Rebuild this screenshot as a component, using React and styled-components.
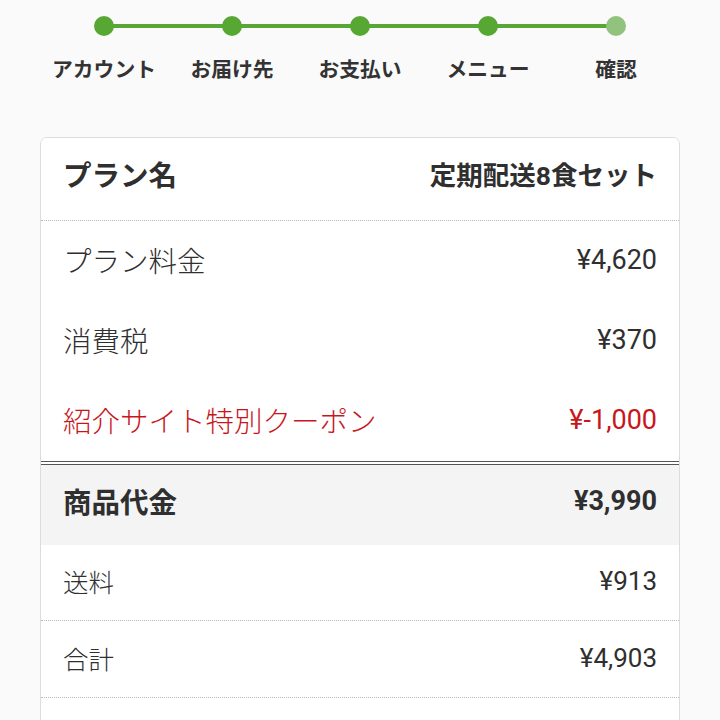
import React from "react";
import styled, { createGlobalStyle } from "styled-components";

const Global = createGlobalStyle`
  html, body { margin: 0; padding: 0; background: #fafafa; }
  body { font-family: Roboto, "Noto Sans CJK JP", sans-serif; color: #2f2f2f; }
  * { box-sizing: border-box; }
`;

const Page = styled.div`
  padding: 16px 40px 0;
`;

const Stepper = styled.div`
  display: grid;
  grid-template-columns: repeat(5, 1fr);
`;

const Step = styled.div`
  position: relative;
  display: flex;
  flex-direction: column;
  align-items: center;
  gap: 20px;
  &::before {
    content: "";
    display: ${(p) => (p.$first ? "none" : "block")};
    position: absolute;
    top: 8px;
    right: 50%;
    width: 100%;
    height: 4px;
    background: #58a734;
  }
`;

const Dot = styled.div`
  position: relative;
  z-index: 1;
  width: 20px;
  height: 20px;
  border-radius: 50%;
  background: ${(p) => (p.$pending ? "#91c27e" : "#58a734")};
`;

const StepLabel = styled.div`
  font-size: 20.8px;
  line-height: 28px;
  font-weight: 700;
  color: #333;
  white-space: nowrap;
`;

const Card = styled.div`
  margin-top: 53px;
  background: #fff;
  border: 1px solid #dcdcdc;
  border-radius: 7px;
  overflow: hidden;
  min-height: 640px;
`;

const Row = styled.div`
  display: flex;
  justify-content: space-between;
  align-items: center;
  padding: 0 22px ${(p) => p.$lift}px;
  height: ${(p) => p.$h}px;
  font-weight: ${(p) => (p.$bold ? 700 : 300)};
  color: ${(p) => (p.$red ? "#c8161d" : "#2f2f2f")};
  background: ${(p) => (p.$gray ? "#f4f4f4" : "#fff")};
  border-bottom: ${(p) =>
    p.$line === "dotted"
      ? "1px dotted #b9b9b9"
      : p.$line === "double"
      ? "4px double #555"
      : "none"};
  box-sizing: content-box;
`;

const Label = styled.span`
  font-size: ${(p) => p.$size}px;
`;
const Value = styled.span`
  font-size: ${(p) => p.$size}px;
  font-weight: ${(p) => (p.$bold ? 700 : 400)};
`;

const steps = [
  { label: "アカウント" },
  { label: "お届け先" },
  { label: "お支払い" },
  { label: "メニュー" },
  { label: "確認", pending: true },
];

const rows = [
  { label: "プラン名", value: "定期配送8食セット", h: 71, lift: 11, ls: 28.5, vs: 26.5, bold: true, line: "dotted" },
  { label: "プラン料金", value: "¥4,620", h: 77, lift: 3, ls: 28.5, vs: 27 },
  { label: "消費税", value: "¥370", h: 77, lift: 3, ls: 28.5, vs: 27 },
  { label: "紹介サイト特別クーポン", value: "¥-1,000", h: 77, lift: 3, ls: 28.5, vs: 27, red: true, line: "double" },
  { label: "商品代金", value: "¥3,990", h: 71, lift: 9, ls: 28.5, vs: 27, bold: true, gray: true },
  { label: "送料", value: "¥913", h: 71, lift: 4, ls: 25.5, vs: 26, line: "dotted" },
  { label: "合計", value: "¥4,903", h: 73, lift: 3, ls: 25.5, vs: 26, line: "dotted" },
];

export default function App() {
  return (
    <>
      <Global />
      <Page>
        <Stepper>
          {steps.map((s, i) => (
            <Step key={s.label} $first={i === 0}>
              <Dot $pending={s.pending} />
              <StepLabel>{s.label}</StepLabel>
            </Step>
          ))}
        </Stepper>
        <Card>
          {rows.map((r) => (
            <Row
              key={r.label}
              $h={r.h}
              $lift={r.lift}
              $bold={r.bold}
              $red={r.red}
              $gray={r.gray}
              $line={r.line}
            >
              <Label $size={r.ls}>{r.label}</Label>
              <Value $size={r.vs} $bold={r.bold}>{r.value}</Value>
            </Row>
          ))}
        </Card>
      </Page>
    </>
  );
}
